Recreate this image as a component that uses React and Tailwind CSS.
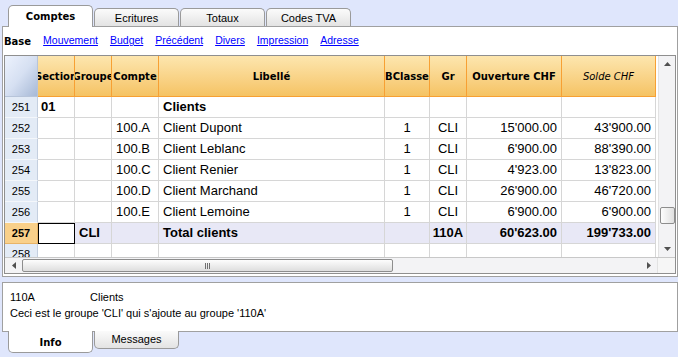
import React from 'react';

const cols = [
  { key: 'sec', w: 'w-[37px]', label: 'Section', align: 'justify-start pl-[3px]' },
  { key: 'grp', w: 'w-[37px]', label: 'Groupe', align: 'justify-start pl-[4px]' },
  { key: 'cpt', w: 'w-[47px]', label: 'Compte', align: 'justify-start pl-[4px]' },
  { key: 'lib', w: 'w-[226px]', label: 'Libellé', align: 'justify-start pl-[4px]' },
  { key: 'bcl', w: 'w-[45px]', label: 'BClasse', align: 'justify-center' },
  { key: 'gr', w: 'w-[37px]', label: 'Gr', align: 'justify-center' },
  { key: 'ouv', w: 'w-[95px]', label: 'Ouverture CHF', align: 'justify-end pr-[4px]' },
  { key: 'sol', w: 'w-[94px]', label: 'Solde CHF', align: 'justify-end pr-[4px]', italic: true },
];

const rows = [
  { n: 251, sec: '01', lib: 'Clients', bold: true },
  { n: 252, cpt: '100.A', lib: 'Client Dupont', bcl: '1', gr: 'CLI', ouv: "15'000.00", sol: "43'900.00" },
  { n: 253, cpt: '100.B', lib: 'Client Leblanc', bcl: '1', gr: 'CLI', ouv: "6'900.00", sol: "88'390.00" },
  { n: 254, cpt: '100.C', lib: 'Client Renier', bcl: '1', gr: 'CLI', ouv: "4'923.00", sol: "13'823.00" },
  { n: 255, cpt: '100.D', lib: 'Client Marchand', bcl: '1', gr: 'CLI', ouv: "26'900.00", sol: "46'720.00" },
  { n: 256, cpt: '100.E', lib: 'Client Lemoine', bcl: '1', gr: 'CLI', ouv: "6'900.00", sol: "6'900.00" },
  { n: 257, grp: 'CLI', lib: 'Total clients', gr: '110A', ouv: "60'623.00", sol: "199'733.00", bold: true, sel: true },
  { n: 258 },
];

function TopTab({ label, active }) {
  if (active) {
    return (
      <div className="w-[85px] h-[22px] -mb-px relative z-10 bg-white border border-b-0 border-[#9a9a9a] rounded-t-[5px] flex items-center justify-center font-['DejaVu_Sans',sans-serif] font-bold text-[10px]">
        {label}
      </div>
    );
  }
  return (
    <div className="w-[85px] h-[18px] bg-linear-to-b from-[#fbfbfb] to-[#e3e3e3] border border-b-0 border-[#9a9a9a] rounded-t-[5px] flex items-center justify-center text-[11px] pt-px">
      {label}
    </div>
  );
}

function Row({ r }) {
  return (
    <div className={`flex h-[21px] shrink-0 ${r.sel ? 'bg-[#e8e8f6]' : 'bg-white'} ${r.bold ? 'font-bold' : ''}`}>
      <div
        className={`w-[33px] shrink-0 flex items-center justify-center text-[11px] border-r border-b ${
          r.sel ? 'bg-[#f9d08a] border-[#e8b468] font-bold' : 'bg-[#e3ebf6] border-r-[#c4cfdf] border-b-[#f4f7fb] font-normal'
        }`}
      >
        {r.n}
      </div>
      {cols.map((c) => {
        const cursor = r.sel && c.key === 'sec';
        return (
          <div
            key={c.key}
            className={`${c.w} shrink-0 flex items-center overflow-hidden whitespace-nowrap text-[13px] ${c.align} ${
              cursor ? 'border border-black bg-white' : 'border-r border-b border-[#d6d6d6]'
            }`}
          >
            {r[c.key] || ''}
          </div>
        );
      })}
    </div>
  );
}

function Tri({ dir, className }) {
  const pts = {
    up: '0,4 3.5,0 7,4',
    down: '0,0 3.5,4 7,0',
    left: '4,0 0,3.5 4,7',
    right: '0,0 4,3.5 0,7',
  }[dir];
  const vert = dir === 'up' || dir === 'down';
  return (
    <svg width={vert ? 7 : 4} height={vert ? 4 : 7} className={className}>
      <polygon points={pts} fill="#505050" />
    </svg>
  );
}

export default function App() {
  return (
    <div className="w-[678px] h-[357px] bg-[#dfe6fc] flex flex-col overflow-hidden font-['Liberation_Sans',Arial,sans-serif] text-black">
      {/* top tabs */}
      <div className="h-[26px] shrink-0 flex items-end pl-[8px] gap-px">
        <TopTab label="Comptes" active />
        <TopTab label="Ecritures" />
        <TopTab label="Totaux" />
        <TopTab label="Codes TVA" />
      </div>

      {/* main panel */}
      <div className="w-[676px] h-[251px] ml-[2px] shrink-0 bg-white border border-[#a0a0a0] flex flex-col">
        <div className="h-[28px] shrink-0 flex items-center pl-px gap-[12px] text-[10.5px]">
          <span className="font-['DejaVu_Sans',sans-serif] font-bold text-[10px]">Base</span>
          {['Mouvement', 'Budget', 'Précédent', 'Divers', 'Impression', 'Adresse'].map((l) => (
            <span key={l} className="text-[#0000ff] underline">
              {l}
            </span>
          ))}
        </div>

        {/* grid frame */}
        <div className="w-[672px] h-[219px] ml-px border border-[#8f8f8f] flex flex-col">
          <div className="flex h-[201px]">
            <div className="w-[651px] flex flex-col overflow-hidden">
              {/* header */}
              <div className="flex h-[41px] shrink-0 font-['DejaVu_Sans',sans-serif] font-bold text-[10px]">
                <div className="w-[33px] shrink-0 bg-linear-to-br from-[#edf2fd] via-[#d6e0f2] to-[#a7b9d6] border-r border-b border-[#b7c4d9]" />
                {cols.map((c) => (
                  <div
                    key={c.key}
                    className={`${c.w} shrink-0 flex items-center justify-center overflow-hidden bg-linear-to-b from-[#fde6ae] to-[#f5c363] border-r border-b border-[#f7a033] ${
                      c.italic ? 'italic font-normal' : ''
                    }`}
                  >
                    <span className="shrink-0 whitespace-nowrap">{c.label}</span>
                  </div>
                ))}
              </div>
              {rows.map((r) => (
                <Row key={r.n} r={r} />
              ))}
            </div>
            <div className="w-[2px] bg-white" />
            {/* vertical scrollbar */}
            <div className="w-[17px] bg-[#f3f3f5] border-l border-[#e2e2e2] flex flex-col items-center">
              <div className="h-[16px] flex items-center justify-center">
                <Tri dir="up" />
              </div>
              <div className="h-[135px]" />
              <div className="w-[15px] h-[17px] rounded-[2px] border border-[#8d8d8d] bg-linear-to-r from-[#fdfdfd] to-[#e0e0e0]" />
              <div className="flex-1" />
              <div className="h-[16px] flex items-center justify-center">
                <Tri dir="down" />
              </div>
            </div>
          </div>
          {/* horizontal scrollbar */}
          <div className="flex h-[16px] border-t border-[#c8c8c8]">
            <div className="w-[652px] bg-[#f3f3f5] flex items-center">
              <div className="w-[17px] flex justify-center">
                <Tri dir="left" />
              </div>
              <div className="w-[371px] h-[13px] rounded-[2px] border border-[#8d8d8d] bg-linear-to-b from-[#fdfdfd] to-[#dedede] flex items-center justify-center gap-px">
                <div className="w-px h-[6px] bg-[#707070]" />
                <div className="w-px h-[6px] bg-[#707070]" />
                <div className="w-px h-[6px] bg-[#707070]" />
              </div>
              <div className="flex-1" />
              <div className="w-[17px] flex justify-center">
                <Tri dir="right" />
              </div>
            </div>
            <div className="flex-1 bg-[#f6f6f6] border-l border-[#e2e2e2]" />
          </div>
        </div>
      </div>

      {/* info panel */}
      <div className="w-[676px] h-[50px] ml-[2px] mt-[5px] shrink-0 bg-white border border-[#a0a0a0] px-[7px] pt-[6px] text-[11px] leading-[16px]">
        <div className="flex">
          <span className="w-[80px]">110A</span>
          <span>Clients</span>
        </div>
        <div>Ceci est le groupe 'CLI' qui s'ajoute au groupe '110A'</div>
      </div>

      {/* bottom tabs */}
      <div className="flex items-start pl-[8px] gap-px">
        <div className="w-[85px] h-[22px] -mt-px bg-white border border-t-0 border-[#9a9a9a] rounded-b-[5px] flex items-center justify-center font-['DejaVu_Sans',sans-serif] font-bold text-[10px] pt-[2px]">
          Info
        </div>
        <div className="w-[85px] h-[18px] -mt-px bg-linear-to-b from-[#fbfbfb] to-[#e3e3e3] border border-t-0 border-[#9a9a9a] rounded-b-[5px] flex items-center justify-center text-[11px]">
          Messages
        </div>
      </div>
    </div>
  );
}
